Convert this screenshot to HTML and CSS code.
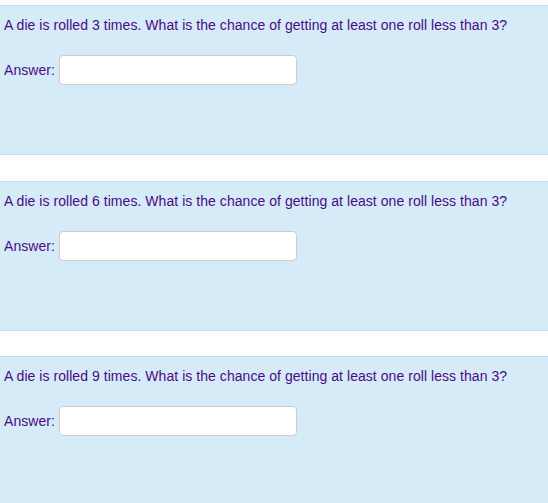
FILE: index.html
```html
<!DOCTYPE html>
<html>
<head>
<meta charset="utf-8">
<link rel="stylesheet" href="styles.css">
</head>
<body>
<div class="panel">
  <p class="question">A die is rolled 3 times. What is the chance of getting at least one roll less than 3?</p>
  <div class="answer-row"><label class="label">Answer:</label><input class="answer" type="text"></div>
</div>
<div class="panel">
  <p class="question">A die is rolled 6 times. What is the chance of getting at least one roll less than 3?</p>
  <div class="answer-row"><label class="label">Answer:</label><input class="answer" type="text"></div>
</div>
<div class="panel">
  <p class="question">A die is rolled 9 times. What is the chance of getting at least one roll less than 3?</p>
  <div class="answer-row"><label class="label">Answer:</label><input class="answer" type="text"></div>
</div>
</body>
</html>
```
FILE: styles.css
```css
html, body {
  margin: 0;
  padding: 0;
  background: #ffffff;
}
body {
  padding-top: 5px;
  font-family: "Liberation Sans", Arial, Helvetica, sans-serif;
  font-size: 14px;
  line-height: 18px;
  letter-spacing: 0.05px;
  color: #4b0a86;
}
.panel {
  box-sizing: border-box;
  height: 150px;
  background: #d5ebf7;
  border-top: 1px solid #b3e3f0;
  border-bottom: 1px solid #b3e3f0;
  padding: 10px 4px 0;
  margin-bottom: 25.5px;
}
.question {
  margin: 0;
}
.answer-row {
  display: flex;
  align-items: center;
  gap: 4px;
  margin-top: 21px;
}
.label {
  display: block;
}
.answer {
  box-sizing: border-box;
  width: 238px;
  height: 30px;
  margin: 0;
  border: 1px solid #cccccc;
  border-radius: 4px;
  background: #ffffff;
  padding: 4px 8px;
  font: inherit;
  outline: none;
}
```
